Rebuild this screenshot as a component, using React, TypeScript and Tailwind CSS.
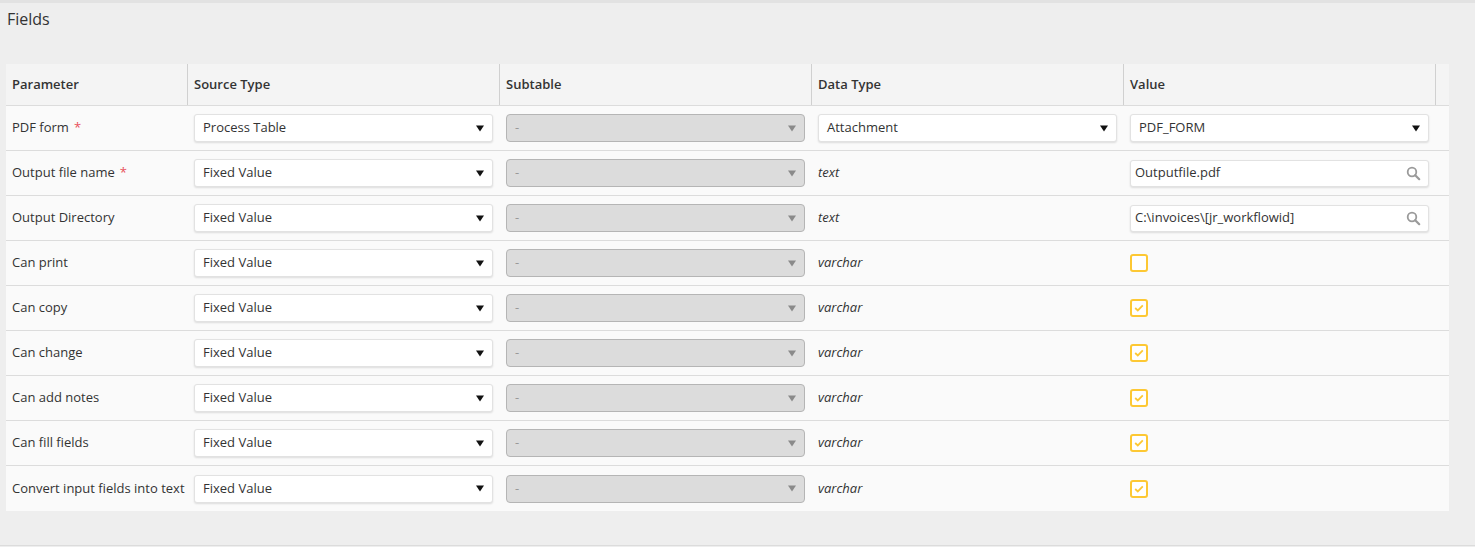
import React from "react";

const Arrow = ({ disabled }: { disabled?: boolean }) => (
  <svg width="8" height="7" viewBox="0 0 8 7" className="shrink-0">
    <path d="M0 0.5 H8 L4 6.5 Z" fill={disabled ? "#8a8a8a" : "#111"} />
  </svg>
);

const Select = ({ value }: { value: string }) => (
  <div className="flex h-[28px] w-full items-center justify-between rounded-[3px] border border-[#e2e2e2] bg-white pl-[8px] pr-[8px] shadow-[0_1px_2px_rgba(0,0,0,0.12)]">
    <span className="text-[13px] text-[#333]">{value}</span>
    <Arrow />
  </div>
);

const Disabled = () => (
  <div className="flex h-[28px] w-full items-center justify-between rounded-[4px] border border-[#b5b5b5] bg-[#dcdcdc] pl-[8px] pr-[8px]">
    <span className="text-[13px] text-[#999]">-</span>
    <Arrow disabled />
  </div>
);

const SearchInput = ({ value }: { value: string }) => (
  <div className="flex h-[27px] w-full items-center justify-between rounded-[3px] border border-[#e2e2e2] bg-white pl-[4px] pr-[7px] shadow-[0_1px_2px_rgba(0,0,0,0.12)]">
    <span className="text-[13px] text-[#333]">{value}</span>
    <svg width="15" height="15" viewBox="0 0 15 15">
      <circle cx="6" cy="6" r="4.3" fill="none" stroke="#9a9a9a" strokeWidth="1.8" />
      <path d="M9.2 9.2 L13.2 13.2" stroke="#9a9a9a" strokeWidth="2.2" strokeLinecap="round" />
    </svg>
  </div>
);

const Checkbox = ({ checked }: { checked: boolean }) => (
  <div className="flex h-[18px] w-[18px] items-center justify-center rounded-[3px] border-2 border-[#fdc834] bg-white">
    {checked && (
      <svg width="10" height="8" viewBox="0 0 10 8">
        <path d="M1.2 4 L3.8 6.4 L8.8 1.4" fill="none" stroke="#fdc834" strokeWidth="1.8" />
      </svg>
    )}
  </div>
);

type Row = {
  name: string;
  req?: boolean;
  source: string;
  dtype: React.ReactNode;
  value: React.ReactNode;
};

const rows: Row[] = [
  { name: "PDF form", req: true, source: "Process Table", dtype: <Select value="Attachment" />, value: <Select value="PDF_FORM" /> },
  { name: "Output file name", req: true, source: "Fixed Value", dtype: <i>text</i>, value: <SearchInput value="Outputfile.pdf" /> },
  { name: "Output Directory", source: "Fixed Value", dtype: <i>text</i>, value: <SearchInput value="C:\invoices\[jr_workflowid]" /> },
  { name: "Can print", source: "Fixed Value", dtype: <i>varchar</i>, value: <Checkbox checked={false} /> },
  { name: "Can copy", source: "Fixed Value", dtype: <i>varchar</i>, value: <Checkbox checked /> },
  { name: "Can change", source: "Fixed Value", dtype: <i>varchar</i>, value: <Checkbox checked /> },
  { name: "Can add notes", source: "Fixed Value", dtype: <i>varchar</i>, value: <Checkbox checked /> },
  { name: "Can fill fields", source: "Fixed Value", dtype: <i>varchar</i>, value: <Checkbox checked /> },
  { name: "Convert input fields into text", source: "Fixed Value", dtype: <i>varchar</i>, value: <Checkbox checked /> },
];

const grid = "grid grid-cols-[182px_312px_312px_312px_312px_13px]";

export default function App() {
  return (
    <div
      className="flex h-[547px] w-[1475px] flex-col bg-[#eeeeee] text-[#333]"
      style={{ fontFamily: '"Open Sans", "Noto Sans", sans-serif' }}
    >
      <div className="h-[3px] bg-[#e2e2e2]" />
      <div className="flex-1 pl-[6px]">
        <div className="pl-[1px] pt-[5px] text-[16px] leading-[22px] text-[#333]">Fields</div>
        <div className="mt-[34px] w-[1443px]">
          <div className={`${grid} h-[42px] border-b border-[#dcdcdc] bg-[#f4f4f4] text-[13px] font-semibold`}>
            <div className="flex items-center border-r border-[#d0d0d0] pl-[6px]">Parameter</div>
            <div className="flex items-center border-r border-[#d0d0d0] pl-[6px]">Source Type</div>
            <div className="flex items-center border-r border-[#d0d0d0] pl-[6px]">Subtable</div>
            <div className="flex items-center border-r border-[#d0d0d0] pl-[6px]">Data Type</div>
            <div className="flex items-center border-r border-[#d0d0d0] pl-[6px]">Value</div>
            <div />
          </div>
          {rows.map((r, i) => (
            <div
              key={i}
              className={`${grid} h-[45px] bg-[#fafafa] text-[13px] ${i < rows.length - 1 ? "border-b border-[#dcdcdc]" : ""}`}
            >
              <div className="flex items-center whitespace-nowrap pl-[6px]">
                {r.name}
                {r.req && <span className="ml-[5px] text-[#e8505b]">*</span>}
              </div>
              <div className="flex items-center pl-[6px] pr-[7px]">
                <Select value={r.source} />
              </div>
              <div className="flex items-center pl-[6px] pr-[7px]">
                <Disabled />
              </div>
              <div className="flex items-center pl-[6px] pr-[7px]">{r.dtype}</div>
              <div className="flex items-center pl-[6px] pr-[7px]">{r.value}</div>
              <div />
            </div>
          ))}
        </div>
      </div>
      <div className="h-[2px] border-t border-[#dcdcdc] bg-[#eeeeee]" />
    </div>
  );
}
